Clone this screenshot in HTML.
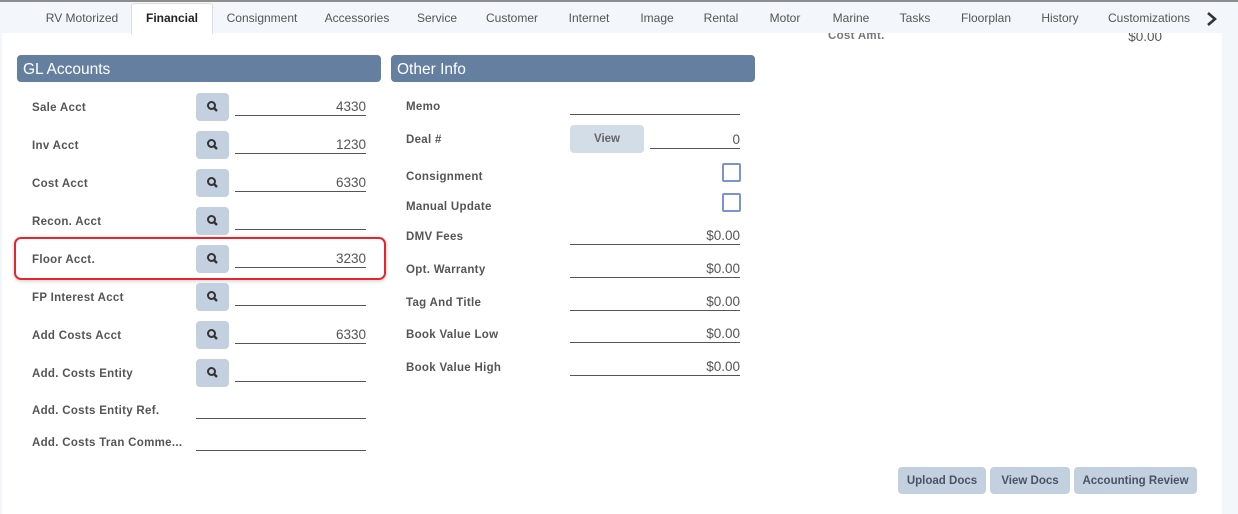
<!DOCTYPE html>
<html><head><style>
*{box-sizing:border-box;margin:0;padding:0}
body{width:1238px;height:514px;background:#f3f6fa;font-family:"Liberation Sans",sans-serif;position:relative;overflow:hidden;color:#444}
.a{position:absolute}
.top{left:0;top:0;width:1238px;height:2px;background:#8d8d8d}
.tab{top:3px;height:31px;line-height:31px;font-size:12px;color:#555;transform:translateX(-50%);white-space:nowrap}
.panel{left:2px;top:33px;width:1220px;height:481px;background:#fff;overflow:hidden}
.hd{height:27px;background:#647f9f;border-radius:4px;color:#fff;font-size:15.5px;line-height:30px;padding-left:6px}
.lb{font-size:11.5px;font-weight:bold;color:#555;letter-spacing:.3px}
.sb{width:33px;height:28px;background:#c3d0df;border-radius:4px}
.ul{border-bottom:1px solid #555;height:20px;font-size:13.5px;text-align:right;color:#555;line-height:22px}
.btn{height:27px;background:#c3d0df;border-radius:4px;font-size:11.5px;font-weight:bold;color:#4a5361;text-align:center;line-height:28px}
.cb{width:19px;height:19px;border:2px solid #7b93d3;border-radius:2px}
</style></head><body>
<div class="a top"></div>
<div class="a panel">
<div class="a lb" style="left:826px;top:-3px;color:#777">Cost Amt.</div>
<div class="a" style="left:1098px;top:-4px;width:62px;text-align:right;font-size:13.5px;color:#555">$0.00</div>
</div>
<div class="a" style="left:131px;top:3px;width:82px;height:31px;background:#fff;border:1px solid #ddd;border-bottom:none;border-radius:3px 3px 0 0"></div>
<div class="a tab" style="left:82px">RV Motorized</div>
<div class="a tab" style="left:172px;font-weight:bold;color:#222">Financial</div>
<div class="a tab" style="left:262px">Consignment</div>
<div class="a tab" style="left:357px">Accessories</div>
<div class="a tab" style="left:437px">Service</div>
<div class="a tab" style="left:512px">Customer</div>
<div class="a tab" style="left:589px">Internet</div>
<div class="a tab" style="left:657px">Image</div>
<div class="a tab" style="left:721px">Rental</div>
<div class="a tab" style="left:785px">Motor</div>
<div class="a tab" style="left:851px">Marine</div>
<div class="a tab" style="left:915px">Tasks</div>
<div class="a tab" style="left:986px">Floorplan</div>
<div class="a tab" style="left:1060px">History</div>
<div class="a tab" style="left:1149px">Customizations</div>
<svg class="a" style="left:1206px;top:11px" width="12" height="16"><path d="M2 2 L9 8 L2 14" stroke="#333" stroke-width="2.6" fill="none"/></svg>

<div class="a hd" style="left:17px;top:55px;width:364px">GL Accounts</div>
<div class="a hd" style="left:391px;top:55px;width:364px">Other Info</div>

<div class="a" style="left:14px;top:237px;width:372px;height:43px;border:2px solid #e8242c;border-radius:7px;box-shadow:0 1px 4px rgba(0,0,0,.2)"></div>

<div id="L"></div>
<script>
var rows=[["Sale Acct","4330"],["Inv Acct","1230"],["Cost Acct","6330"],["Recon. Acct",""],["Floor Acct.","3230"],["FP Interest Acct",""],["Add Costs Acct","6330"],["Add. Costs Entity",""]];
var h="";
var mag='<svg width="33" height="28"><circle cx="15.5" cy="12.5" r="3.5" stroke="#333" stroke-width="2" fill="none"/><path d="M18 15 L21 18" stroke="#333" stroke-width="2.4"/></svg>';
rows.forEach(function(r,i){var y=107+38*i;
h+='<div class="a lb" style="left:32px;top:'+(y-5)+'px">'+r[0]+'</div>';
h+='<div class="a sb" style="left:196px;top:'+(y-14)+'px">'+mag+'</div>';
h+='<div class="a ul" style="left:235px;top:'+(y-11)+'px;width:131px">'+r[1]+'</div>';});
[["Add. Costs Entity Ref.",410],["Add. Costs Tran Comme...",442]].forEach(function(r){
h+='<div class="a lb" style="left:32px;top:'+(r[1]-5)+'px">'+r[0]+'</div>';
h+='<div class="a ul" style="left:196px;top:'+(r[1]-11)+'px;width:170px"></div>';});
var R=[["Memo",106,""],["Deal #",139,"0"],["Consignment",176,null],["Manual Update",206,null],["DMV Fees",236,"$0.00"],["Opt. Warranty",269,"$0.00"],["Tag And Title",302,"$0.00"],["Book Value Low",334,"$0.00"],["Book Value High",367,"$0.00"]];
R.forEach(function(r){var y=r[1];
h+='<div class="a lb" style="left:406px;top:'+(y-5)+'px">'+r[0]+'</div>';
if(r[0]=="Deal #"){h+='<div class="a btn" style="left:570px;top:125px;width:74px;height:28px;line-height:29px;background:#d3dde8;color:#666">View</div><div class="a ul" style="left:650px;top:'+(y-10)+'px;width:90px">0</div>';}
else if(r[2]===null){h+='<div class="a cb" style="left:722px;top:'+(y-13)+'px"></div>';}
else h+='<div class="a ul" style="left:570px;top:'+(y-11)+'px;width:170px">'+r[2]+'</div>';});
document.getElementById("L").innerHTML=h;
</script>

<div class="a btn" style="left:898px;top:467px;width:88px">Upload Docs</div>
<div class="a btn" style="left:990px;top:467px;width:80px">View Docs</div>
<div class="a btn" style="left:1074px;top:467px;width:123px">Accounting Review</div>
</body></html>
